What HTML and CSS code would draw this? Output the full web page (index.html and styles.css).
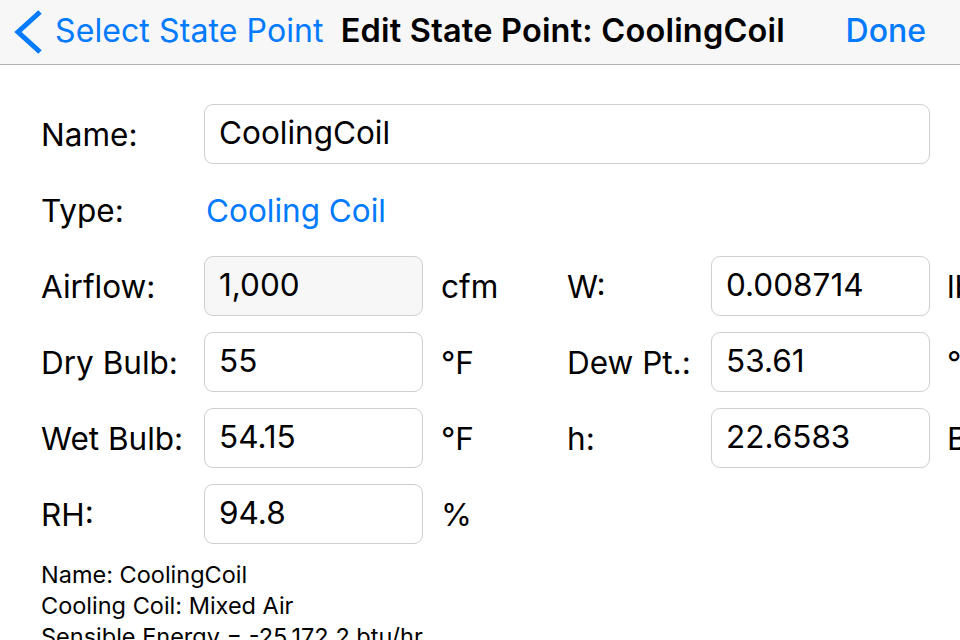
FILE: index.html
```html
<!DOCTYPE html>
<html>
<head>
<meta charset="utf-8">
<link rel="stylesheet" href="styles.css">
</head>
<body>
<header class="navbar">
  <div class="back">
    <svg class="chevron" width="30" height="46" viewBox="0 0 30 46"><path d="M26 2 L4 22 L26 42" fill="none" stroke="#007aff" stroke-width="5"/></svg>
    <span class="back-label">Select State Point</span>
  </div>
  <div class="title">Edit State Point: CoolingCoil</div>
  <div class="done">Done</div>
</header>
<main class="form">
  <div class="label left">Name:</div>
  <div class="field wide">CoolingCoil</div>

  <div class="label left">Type:</div>
  <div class="link">Cooling Coil</div>

  <div class="label left">Airflow:</div>
  <div class="field disabled">1,000</div>
  <div class="unit">cfm</div>
  <div class="label right">W:</div>
  <div class="field">0.008714</div>
  <div class="unit last">lb/lb</div>

  <div class="label left">Dry Bulb:</div>
  <div class="field">55</div>
  <div class="unit">°F</div>
  <div class="label right">Dew Pt.:</div>
  <div class="field">53.61</div>
  <div class="unit last">°F</div>

  <div class="label left">Wet Bulb:</div>
  <div class="field">54.15</div>
  <div class="unit">°F</div>
  <div class="label right">h:</div>
  <div class="field">22.6583</div>
  <div class="unit last">Btu/lb</div>

  <div class="label left">RH:</div>
  <div class="field">94.8</div>
  <div class="unit">%</div>
</main>
<section class="summary">
  <div>Name: CoolingCoil</div>
  <div>Cooling Coil: Mixed Air</div>
  <div>Sensible Energy = -25,172.2 btu/hr</div>
</section>
</body>
</html>
```
FILE: styles.css
```css
html, body {
  margin: 0;
  padding: 0;
  overflow: hidden;
  width: 960px;
  height: 640px;
  background: #fff;
  font-family: "Inter", "Roboto", "Liberation Sans", sans-serif;
  color: #000;
}
.navbar {
  height: 64px;
  background: #f7f7f7;
  border-bottom: 1px solid #b2b2b2;
  display: flex;
  align-items: center;
  font-size: 32px;
  white-space: nowrap;
}
.back {
  display: flex;
  align-items: center;
  padding-left: 14px;
  color: #007aff;
}
.chevron {
  display: block;
  margin-top: 1px;
}
.back-label, .title, .done {
  padding-bottom: 3px;
}
.back-label {
  margin-left: 11px;
  letter-spacing: 0.1px;
}
.title {
  margin-left: 17px;
  font-weight: 600;
  font-size: 32.5px;
  letter-spacing: 0.2px;
}
.done {
  margin-left: auto;
  padding-right: 34px;
  color: #007aff;
  font-weight: 500;
}
.form {
  display: grid;
  grid-template-columns: 163px 219px 144px 144px 219px 140px;
  grid-auto-rows: 60px;
  row-gap: 16px;
  padding: 39px 0 0 41px;
  width: 1100px;
  font-size: 31.5px;
  align-items: center;
}
.label {
  white-space: nowrap;
}
.label.left {
  grid-column: 1;
}
.label.right {
  grid-column: 4;
}
.field {
  height: 60px;
  box-sizing: border-box;
  border: 1px solid #cfcfcf;
  border-radius: 9px;
  padding: 0 14px 4px;
  display: flex;
  align-items: center;
  background: #fff;
}
.field.wide {
  grid-column: 2 / 6;
}
.field.disabled {
  background: #f7f7f7;
}
.link {
  grid-column: 2 / 6;
  color: #007aff;
  padding-left: 2px;
}
.unit {
  padding-left: 18px;
  white-space: nowrap;
}
.unit.last {
  padding-left: 17px;
}
.summary {
  padding: 15px 0 0 41px;
  font-size: 23.5px;
  line-height: 31px;
}
```
